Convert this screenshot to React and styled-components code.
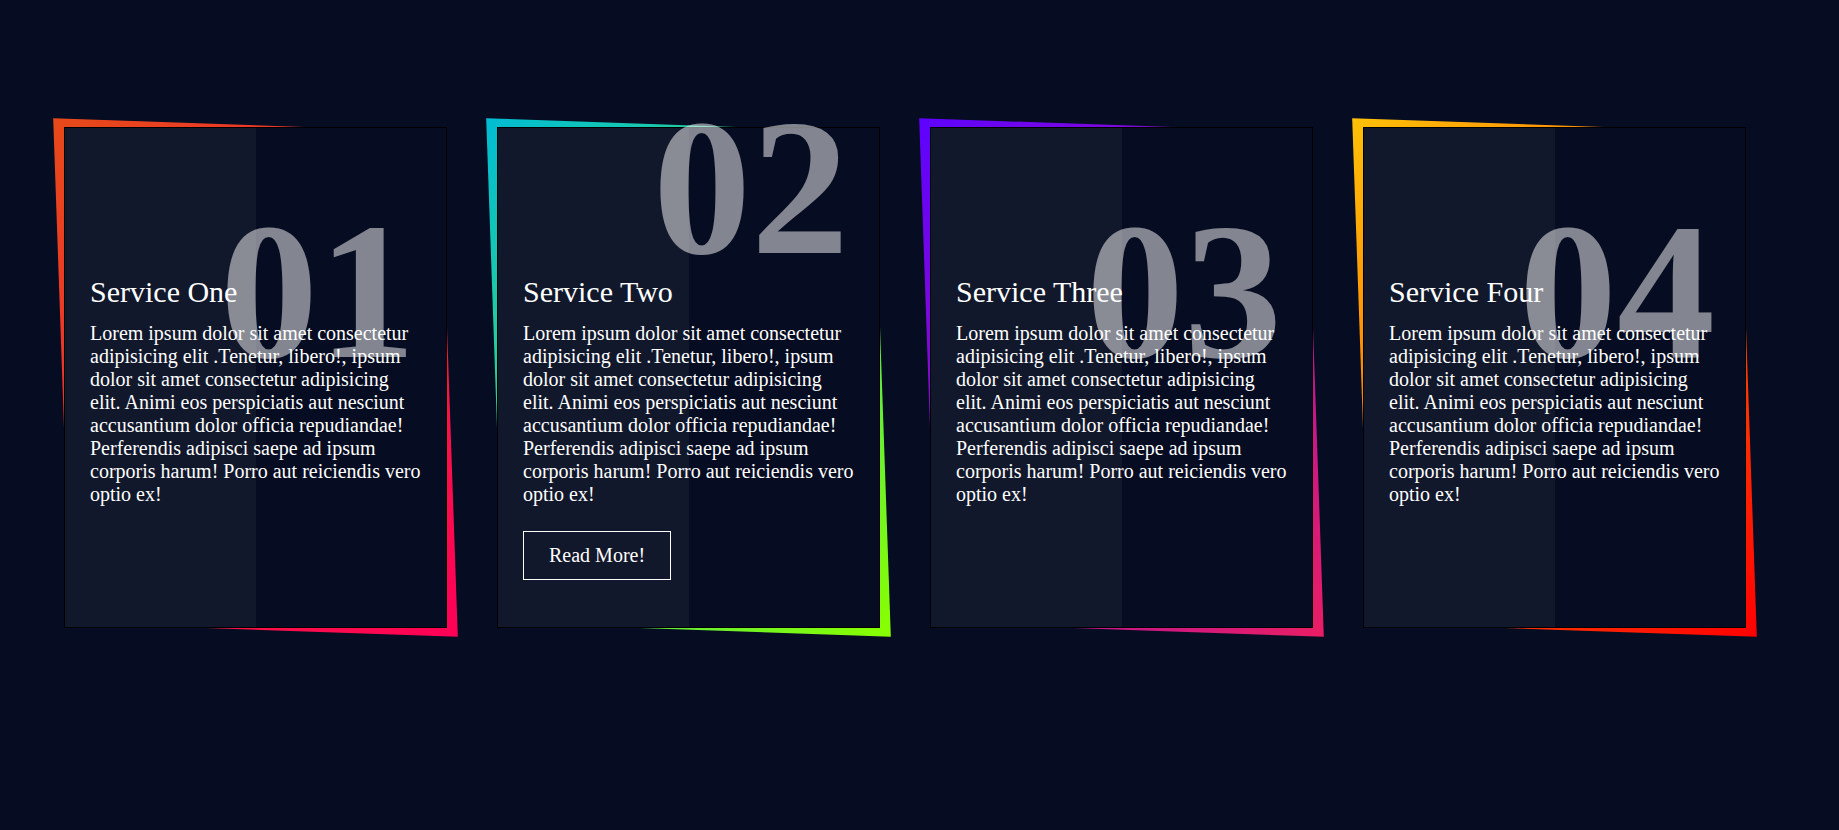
import React from 'react';
import styled, { createGlobalStyle } from 'styled-components';

const GlobalStyle = createGlobalStyle`
  html, body {
    margin: 0;
    padding: 0;
    background: #060c21;
  }
  body {
    font-family: "Liberation Serif", "Times New Roman", serif;
  }
`;

const Page = styled.div`
  isolation: isolate;
  min-height: 100vh;
  background: #060c21;
  box-sizing: border-box;
  padding: 127px 0 0 64px;
  display: flex;
  align-items: flex-start;
  gap: 50px;
`;

const Card = styled.div`
  position: relative;
  width: 383px;
  height: 501px;
  box-sizing: border-box;
  border: 1px solid #000;
  background: #060c21;
  padding: 147px 25px 0 25px;
  display: flex;
  flex-direction: column;
  align-items: flex-start;

  /* skewed gradient frame peeking out behind the card */
  &::before {
    content: '';
    position: absolute;
    top: -3px;
    left: -3px;
    right: -3px;
    bottom: -3px;
    background: linear-gradient(315deg, ${p => p.from}, ${p => p.to});
    transform: skew(2deg, 2deg);
    z-index: -1;
  }

  /* lighter left half */
  &::after {
    content: '';
    position: absolute;
    top: 0;
    left: 0;
    bottom: 0;
    width: 50%;
    background: rgba(255, 255, 255, 0.05);
    pointer-events: none;
  }
`;

const Number = styled.h2`
  position: absolute;
  top: ${p => (p.active ? '-54px' : '50px')};
  right: 30px;
  margin: 0;
  padding: 0;
  font-size: 196px;
  font-weight: bold;
  line-height: normal;
  color: rgba(255, 255, 255, 0.5);
`;

const Title = styled.h3`
  position: relative;
  margin: 0 0 12.5px;
  padding: 0;
  font-size: 30px;
  font-weight: 500;
  line-height: normal;
  color: #fff;
`;

const Text = styled.p`
  position: relative;
  margin: 0;
  padding: 0;
  font-size: 20px;
  line-height: normal;
  color: #fff;
`;

const ReadMore = styled.a`
  position: relative;
  display: inline-block;
  margin: 25px 0 0;
  padding: 12px 25px;
  border: 1px solid #fff;
  color: #fff;
  font-size: 20px;
  line-height: normal;
  text-decoration: none;
`;

const lorem =
  'Lorem ipsum dolor sit amet consectetur adipisicing elit .Tenetur, libero!, ipsum dolor sit amet consectetur adipisicing elit. Animi eos perspiciatis aut nesciunt accusantium dolor officia repudiandae! Perferendis adipisci saepe ad ipsum corporis harum! Porro aut reiciendis vero optio ex!';

const services = [
  { num: '01', title: 'Service One', from: '#ff0057', to: '#e64a19' },
  { num: '02', title: 'Service Two', from: '#89ff00', to: '#00bcd4', active: true },
  { num: '03', title: 'Service Three', from: '#e91e63', to: '#5d02ff' },
  { num: '04', title: 'Service Four', from: '#ff0000', to: '#ffc107' },
];

export default function App() {
  return (
    <>
      <GlobalStyle />
      <Page>
        {services.map(s => (
          <Card key={s.num} from={s.from} to={s.to}>
            <Number active={s.active}>{s.num}</Number>
            <Title>{s.title}</Title>
            <Text>{lorem}</Text>
            {s.active && <ReadMore href="#">Read More!</ReadMore>}
          </Card>
        ))}
      </Page>
    </>
  );
}
